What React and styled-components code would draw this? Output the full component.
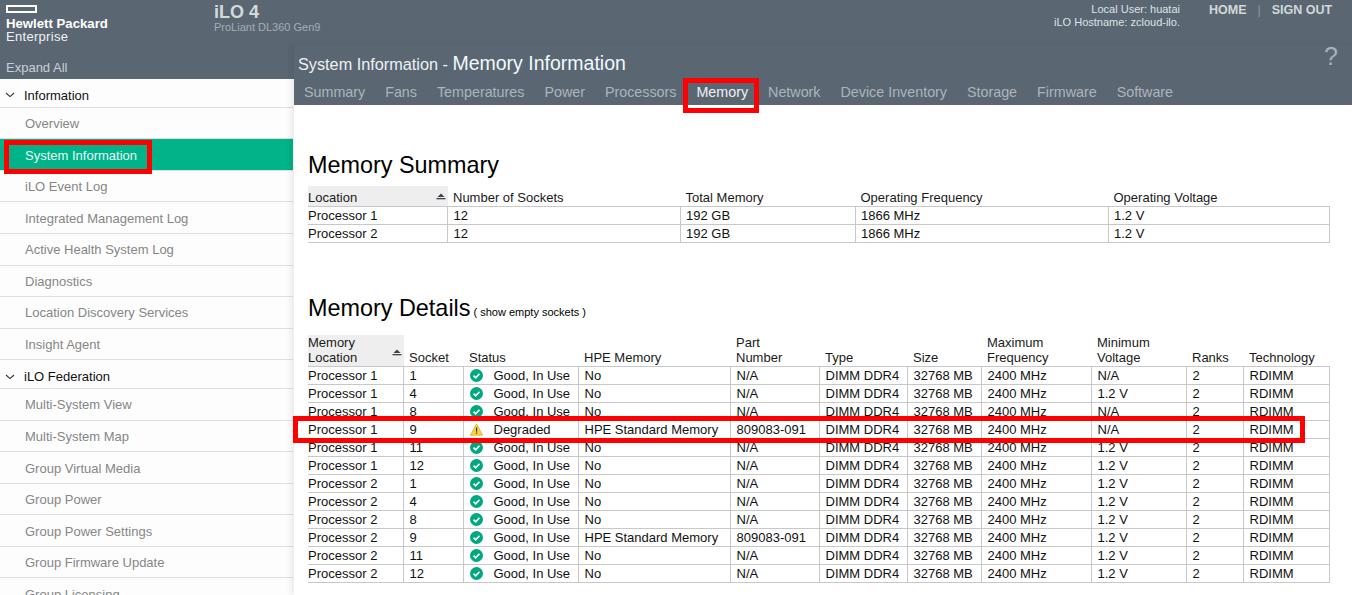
import React from 'react';
import styled, { createGlobalStyle } from 'styled-components';

const Global = createGlobalStyle`
  html, body { margin: 0; padding: 0; height: 100%; overflow: hidden; background: #fff; }
  body { font-family: "Liberation Sans", Arial, sans-serif; font-size: 13px; color: #000; }
  * { box-sizing: border-box; }
`;

const Page = styled.div`
  position: relative;
  width: 1352px;
  height: 595px;
  overflow: hidden;
  display: flex;
  flex-direction: column;
  background: #5a6773;
`;
const TopBar = styled.header`
  height: 45px;
  flex: none;
  display: flex;
  background: #5a6773;
`;
const Logo = styled.div`
  width: 214px;
  flex: none;
  padding: 5px 0 0 6px;
  color: #fff;
`;
const LogoBar = styled.div`
  width: 31px;
  height: 8px;
  border: 2px solid #fff;
`;
const LogoStrong = styled.div`
  margin-top: 4px;
  font-size: 13.2px;
  line-height: 14px;
  font-weight: 700;
`;
const LogoLight = styled.div`
  font-size: 13px;
  line-height: 12px;
  letter-spacing: 0.3px;
  color: #f0f2f3;
`;
const Product = styled.div`
  flex: 1;
  padding-top: 2px;
`;
const ProductName = styled.div`
  font-size: 18px;
  line-height: 20px;
  font-weight: 700;
  color: #d5d9dc;
`;
const ProductModel = styled.div`
  font-size: 11px;
  line-height: 11px;
  color: #a4adb5;
`;
const Session = styled.div`
  text-align: right;
  padding-top: 3px;
  font-size: 11px;
  line-height: 13px;
  color: #dfe2e5;
`;
const TopNav = styled.nav`
  width: 172px;
  flex: none;
  padding: 3px 0 0 29px;
  display: flex;
  align-items: flex-start;
  font-size: 12.5px;
  line-height: 15px;
  font-weight: 700;
  color: #d3d7da;
`;
const NavSep = styled.span`
  margin: 0 11px 0 11px;
  font-weight: 400;
  color: #8b959e;
`;
const Body = styled.div`
  flex: 1;
  min-height: 0;
  display: flex;
`;
const Sidebar = styled.aside`
  width: 294px;
  flex: none;
  display: flex;
  flex-direction: column;
`;
const Expand = styled.div`
  height: 34px;
  flex: none;
  padding: 15px 0 0 6px;
  font-size: 13px;
  line-height: 16px;
  color: #c9ced2;
`;
const Tree = styled.div`
  flex: 1;
  background: #fdfdfd;
  overflow: hidden;
  padding-right: 1px;
`;
const Group = styled.div`
  height: 28.8px;
  display: flex;
  align-items: center;
  gap: 9px;
  padding: 5px 0 0 5px;
  border-bottom: 1px solid #dfdfdf;
  color: #111;
`;
const Item = styled.div`
  height: 31.57px;
  display: flex;
  align-items: center;
  padding: 1px 0 0 25px;
  border-bottom: 1px solid #dfdfdf;
  background: ${p => (p.$active ? '#00b388' : 'transparent')};
  color: ${p => (p.$active ? '#eafaf6' : '#868686')};
`;
const Main = styled.main`
  flex: 1;
  min-width: 0;
  display: flex;
  flex-direction: column;
  background: #fff;
  box-shadow: -3px 0 6px rgba(0, 0, 0, 0.08);
  z-index: 1;
`;
const MainHead = styled.div`
  position: relative;
  height: 60px;
  flex: none;
  background: #5a6773;
`;
const Title = styled.div`
  padding: 5px 0 0 4px;
  height: 39px;
  line-height: 27px;
  color: #eef1f3;
  font-size: 16.25px;
`;
const TitleBig = styled.span`
  font-size: 19.5px;
  color: #f0fafd;
`;
const Help = styled.div`
  position: absolute;
  top: 0;
  right: 14px;
  font-size: 25px;
  line-height: 22px;
  font-weight: 400;
  color: #a9b1b8;
`;
const Tabs = styled.div`
  display: flex;
  gap: 20px;
  padding-left: 10px;
  font-size: 14.3px;
  line-height: 16px;
`;
const Tab = styled.span`
  color: ${p => (p.$active ? '#eef1f3' : '#adb4ba')};
`;
const Content = styled.div`
  flex: 1;
  padding: 45px 22px 0 14px;
`;
const H1 = styled.h1`
  margin: 0;
  font-size: 23.4px;
  line-height: 30px;
  font-weight: 400;
  color: #000;
`;
const Small = styled.span`
  margin-left: 3px;
  font-size: 11px;
`;
const Table = styled.table`
  width: 1021px;
  table-layout: fixed;
  border-collapse: collapse;
  font-size: 13px;
  line-height: 15px;
`;
const SummaryTable = styled(Table)`
  margin-top: 6px;
  margin-bottom: 50px;
`;
const DetailTable = styled(Table)`
  margin-top: 8.3px;
`;
const Th = styled.th`
  position: relative;
  padding: 0 0 0 ${p => (p.$sorted ? 0 : 5.5)}px;
  height: ${p => p.$h || 20}px;
  text-align: left;
  vertical-align: bottom;
  font-weight: 400;
  color: #1a1a1a;
  line-height: ${p => (p.$h ? 15.5 : 16)}px;
  background: ${p => (p.$sorted ? '#eeeeee' : 'transparent')};
  border-bottom: 1px solid #c8c8c8;
`;
const Sort = styled.svg`
  position: absolute;
  right: 2px;
  bottom: ${p => p.$b}px;
`;
const Td = styled.td`
  height: 18px;
  padding: 0 0 0 ${p => (p.$first ? 0 : 5.5)}px;
  white-space: nowrap;
  overflow: hidden;
  color: #111;
  border-bottom: 1px solid #c8c8c8;
  border-left: ${p => (p.$first ? 'none' : '1px solid #c8c8c8')};
  border-right: ${p => (p.$last ? '1px solid #c8c8c8' : 'none')};
`;
const Status = styled.span`
  display: flex;
  align-items: center;
  gap: 11px;
`;
const Marker = styled.div`
  position: absolute;
  left: ${p => p.$x}px;
  top: ${p => p.$y}px;
  width: ${p => p.$w}px;
  height: ${p => p.$h}px;
  border: 5px solid #ff0000;
  z-index: 5;
  pointer-events: none;
`;

const Chevron = () => (
  <svg width="10" height="6" viewBox="0 0 10 6" fill="none" style={{ flex: 'none' }}>
    <path d="M1 1l4 3.6L9 1" stroke="#333" strokeWidth="1.1" />
  </svg>
);
const SortIcon = ({ b }) => (
  <Sort $b={b} width="10" height="7" viewBox="0 0 10 7">
    <path d="M5 0.5L8.5 4h-7z" fill="#3c4450" />
    <rect x="0.5" y="5" width="9" height="1.3" fill="#3c4450" />
  </Sort>
);
const Good = () => (
  <svg width="13" height="13" viewBox="0 0 14 14" style={{ flex: 'none' }}>
    <circle cx="7" cy="7" r="7" fill="#00a87e" />
    <path d="M3.8 7.1l2.3 2.3 4.1-4.3" fill="none" stroke="#fff" strokeWidth="1.8" />
  </svg>
);
const Warn = () => (
  <svg width="13" height="13" viewBox="0 0 14 14" style={{ flex: 'none' }}>
    <path d="M7 0.8L13.6 13.2H0.4z" fill="#fdd835" stroke="#c9a227" strokeWidth="0.7" />
    <rect x="6.4" y="4.8" width="1.3" height="4.6" fill="#333" />
    <rect x="6.4" y="10.2" width="1.3" height="1.4" fill="#333" />
  </svg>
);

const info = ['Overview', 'System Information', 'iLO Event Log', 'Integrated Management Log', 'Active Health System Log', 'Diagnostics', 'Location Discovery Services', 'Insight Agent'];
const fed = ['Multi-System View', 'Multi-System Map', 'Group Virtual Media', 'Group Power', 'Group Power Settings', 'Group Firmware Update', 'Group Licensing'];
const tabs = ['Summary', 'Fans', 'Temperatures', 'Power', 'Processors', 'Memory', 'Network', 'Device Inventory', 'Storage', 'Firmware', 'Software'];

const sumWidths = [139.5, 232.5, 175, 253, 221];
const sumRows = [['Processor 1', '12', '192 GB', '1866 MHz', '1.2 V'], ['Processor 2', '12', '192 GB', '1866 MHz', '1.2 V']];
const detWidths = [95.5, 60, 115, 152, 89, 88, 74, 110, 95, 57, 85.5];
const detHead = [['Memory', 'Location'], ['Socket'], ['Status'], ['HPE Memory'], ['Part', 'Number'], ['Type'], ['Size'], ['Maximum', 'Frequency'], ['Minimum', 'Voltage'], ['Ranks'], ['Technology']];
const det = [
  ['1', 1, 'Good, In Use', 'No', 'N/A', 'N/A'],
  ['1', 4, 'Good, In Use', 'No', 'N/A', '1.2 V'],
  ['1', 8, 'Good, In Use', 'No', 'N/A', 'N/A'],
  ['1', 9, 'Degraded', 'HPE Standard Memory', '809083-091', 'N/A'],
  ['1', 11, 'Good, In Use', 'No', 'N/A', '1.2 V'],
  ['1', 12, 'Good, In Use', 'No', 'N/A', '1.2 V'],
  ['2', 1, 'Good, In Use', 'No', 'N/A', '1.2 V'],
  ['2', 4, 'Good, In Use', 'No', 'N/A', '1.2 V'],
  ['2', 8, 'Good, In Use', 'No', 'N/A', '1.2 V'],
  ['2', 9, 'Good, In Use', 'HPE Standard Memory', '809083-091', '1.2 V'],
  ['2', 11, 'Good, In Use', 'No', 'N/A', '1.2 V'],
  ['2', 12, 'Good, In Use', 'No', 'N/A', '1.2 V'],
];

export default function App() {
  return (
    <Page>
      <Global />
      <TopBar>
        <Logo>
          <LogoBar />
          <LogoStrong>Hewlett Packard</LogoStrong>
          <LogoLight>Enterprise</LogoLight>
        </Logo>
        <Product>
          <ProductName>iLO 4</ProductName>
          <ProductModel>ProLiant DL360 Gen9</ProductModel>
        </Product>
        <Session>
          <div>Local User: huatai</div>
          <div>iLO Hostname: zcloud-ilo.</div>
        </Session>
        <TopNav>
          <span>HOME</span>
          <NavSep>|</NavSep>
          <span>SIGN OUT</span>
        </TopNav>
      </TopBar>
      <Body>
        <Sidebar>
          <Expand>Expand All</Expand>
          <Tree>
            <Group><Chevron />Information</Group>
            {info.map(t => <Item key={t} $active={t === 'System Information'}>{t}</Item>)}
            <Group><Chevron />iLO Federation</Group>
            {fed.map(t => <Item key={t}>{t}</Item>)}
          </Tree>
        </Sidebar>
        <Main>
          <MainHead>
            <Title>System Information - <TitleBig>Memory Information</TitleBig></Title>
            <Help>?</Help>
            <Tabs>
              {tabs.map(t => <Tab key={t} $active={t === 'Memory'}>{t}</Tab>)}
            </Tabs>
          </MainHead>
          <Content>
            <H1>Memory Summary</H1>
            <SummaryTable>
              <colgroup>{sumWidths.map((w, i) => <col key={i} style={{ width: w }} />)}</colgroup>
              <thead>
                <tr>
                  <Th $sorted>Location<SortIcon b={6} /></Th>
                  <Th>Number of Sockets</Th>
                  <Th>Total Memory</Th>
                  <Th>Operating Frequency</Th>
                  <Th>Operating Voltage</Th>
                </tr>
              </thead>
              <tbody>
                {sumRows.map(r => (
                  <tr key={r[0]}>
                    {r.map((c, i) => <Td key={i} $first={i === 0} $last={i === 4}>{c}</Td>)}
                  </tr>
                ))}
              </tbody>
            </SummaryTable>
            <H1>Memory Details<Small>( show empty sockets )</Small></H1>
            <DetailTable>
              <colgroup>{detWidths.map((w, i) => <col key={i} style={{ width: w }} />)}</colgroup>
              <thead>
                <tr>
                  {detHead.map((h, i) => (
                    <Th key={i} $sorted={i === 0} $h={31}>
                      {h.map(l => <div key={l}>{l}</div>)}
                      {i === 0 && <SortIcon b={10} />}
                    </Th>
                  ))}
                </tr>
              </thead>
              <tbody>
                {det.map(r => (
                  <tr key={r[0] + '-' + r[1]}>
                    <Td $first>Processor {r[0]}</Td>
                    <Td>{r[1]}</Td>
                    <Td><Status>{r[2] === 'Degraded' ? <Warn /> : <Good />}{r[2]}</Status></Td>
                    <Td>{r[3]}</Td>
                    <Td>{r[4]}</Td>
                    <Td>DIMM DDR4</Td>
                    <Td>32768 MB</Td>
                    <Td>2400 MHz</Td>
                    <Td>{r[5]}</Td>
                    <Td>2</Td>
                    <Td $last>RDIMM</Td>
                  </tr>
                ))}
              </tbody>
            </DetailTable>
          </Content>
        </Main>
      </Body>
      <Marker $x={4} $y={140} $w={148} $h={34} />
      <Marker $x={683} $y={78} $w={76} $h={35} />
      <Marker $x={293} $y={416} $w={1012} $h={27} />
    </Page>
  );
}
